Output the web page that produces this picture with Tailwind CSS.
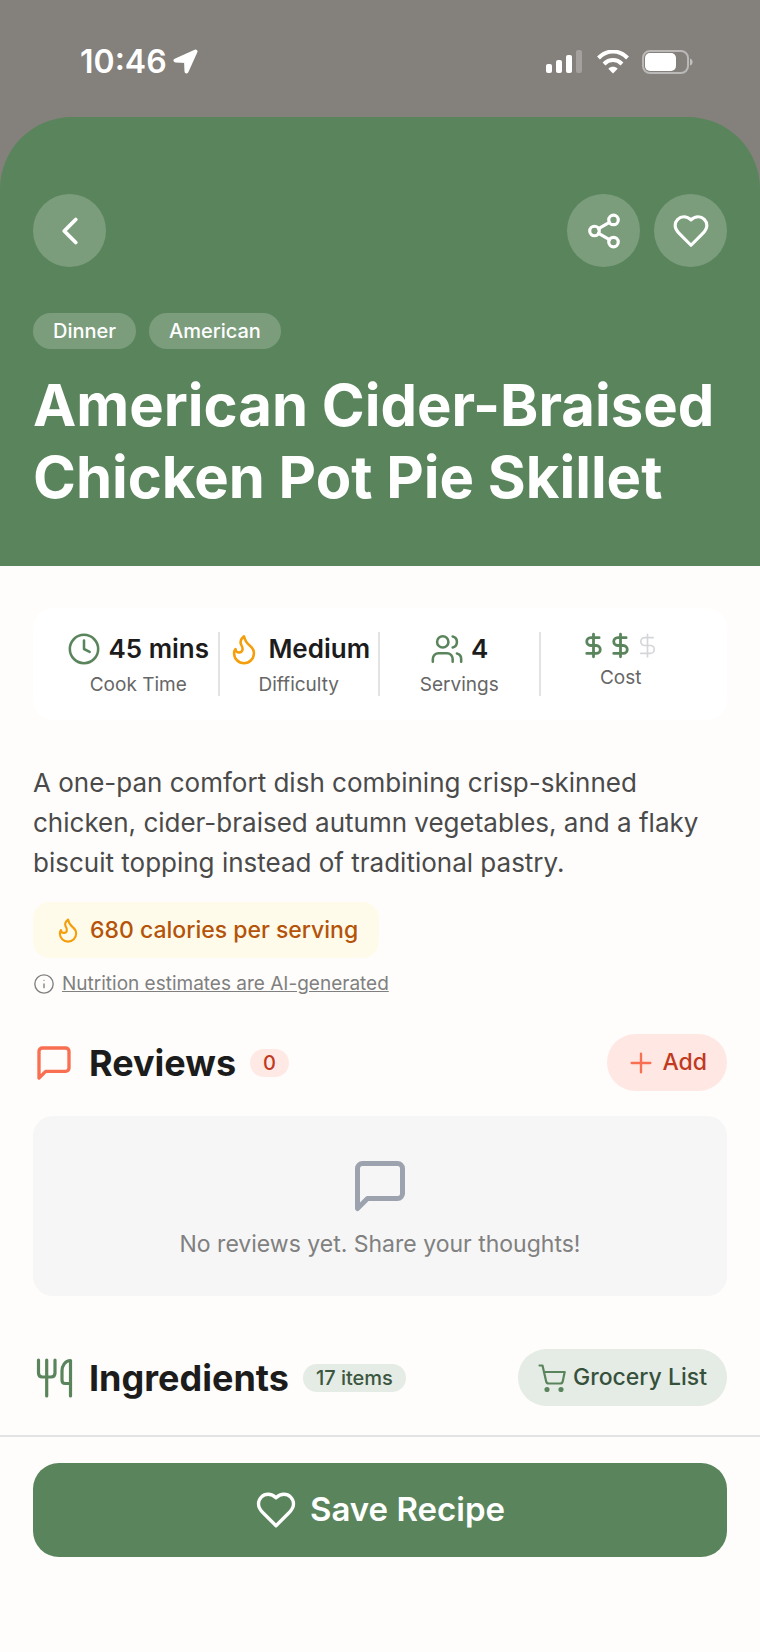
<!DOCTYPE html>
<html lang="en">
<head>
    <meta charset="UTF-8">
    <meta name="viewport" content="width=device-width, initial-scale=1.0">
    <title>American Cider-Braised Chicken Pot Pie Skillet</title>
    <script src="https://cdn.jsdelivr.net/npm/@tailwindcss/browser@4"></script>
</head>
<body class="flex min-h-screen flex-col bg-[#fefdfb] font-['Inter','Liberation_Sans',sans-serif] text-[#1c1c1c]">

    <div class="bg-[#84807c]">
        <!-- Status bar -->
        <div class="flex h-[117px] items-center justify-between pt-[6px] pr-[66px] pl-20 text-white">
            <div class="flex items-center gap-[6px]">
                <span class="text-[32px] font-semibold">10:46</span>
                <svg class="size-[25px]" viewBox="0 0 25 25" fill="currentColor" stroke="currentColor" stroke-width="4" stroke-linejoin="round"><path d="M22.500 2.500 2.500 11.500l10.500.5.500 10.500z"/></svg>
            </div>
            <div class="flex items-center gap-[13px]">
                <svg class="h-6 w-[38px]" viewBox="0 0 38 24" fill="currentColor">
                    <rect x="0" y="14" width="6" height="9" rx="2"/>
                    <rect x="10" y="10" width="6" height="13" rx="2"/>
                    <rect x="20" y="5" width="6" height="18" rx="2"/>
                    <rect x="30" y="0" width="6" height="23" rx="2" opacity=".25"/>
                </svg>
                <svg class="h-6 w-8" viewBox="0 0 32 24" fill="none" stroke="currentColor" stroke-width="4">
                    <path d="M1.500 8C10-.7 22-.7 30.500 8"/>
                    <path d="M7 14C12.300 8.800 19.700 8.800 25 14"/>
                    <path d="M16 23.500 11.300 18.700C14 16.200 18 16.200 20.700 18.700z" fill="currentColor" stroke="none"/>
                </svg>
                <svg class="h-6 w-[52px]" viewBox="0 0 52 24" fill="none">
                    <rect x="1" y="1" width="45" height="22" rx="7" stroke="currentColor" stroke-width="2" opacity=".45"/>
                    <rect x="3" y="3" width="31" height="18" rx="5" fill="currentColor"/>
                    <path d="M48 8.500c3.500 1 3.500 6 0 7z" fill="currentColor" opacity=".5"/>
                </svg>
            </div>
        </div>

        <!-- Recipe header -->
        <header class="rounded-t-[72px] bg-[#5a855c] px-[33px] pt-[77px] pb-[53px] text-white">
            <div class="flex items-center gap-[14px]">
                <button type="button" aria-label="Back" class="mr-auto flex size-[73px] items-center justify-center rounded-full bg-white/20">
                    <svg class="size-[46px]" viewBox="0 0 24 24" fill="none" stroke="currentColor" stroke-width="2" stroke-linecap="round" stroke-linejoin="round"><path d="m15 18-6-6 6-6"/></svg>
                </button>
                <button type="button" aria-label="Share" class="flex size-[73px] items-center justify-center rounded-full bg-white/20">
                    <svg class="size-[38px]" viewBox="0 0 24 24" fill="none" stroke="currentColor" stroke-width="2" stroke-linecap="round" stroke-linejoin="round"><circle cx="18" cy="5" r="3"/><circle cx="6" cy="12" r="3"/><circle cx="18" cy="19" r="3"/><path d="m8.590 13.510 6.830 3.980M15.410 6.510l-6.820 3.980"/></svg>
                </button>
                <button type="button" aria-label="Favorite" class="flex size-[73px] items-center justify-center rounded-full bg-white/20">
                    <svg class="size-[38px]" viewBox="0 0 24 24" fill="none" stroke="currentColor" stroke-width="2" stroke-linecap="round" stroke-linejoin="round"><path d="M19 14c1.490-1.460 3-3.210 3-5.500A5.500 5.500 0 0 0 16.500 3c-1.760 0-3 .5-4.500 2-1.500-1.500-2.740-2-4.500-2A5.500 5.500 0 0 0 2 8.500c0 2.300 1.500 4.050 3 5.500l7 7Z"/></svg>
                </button>
            </div>
            <div class="mt-[46px] flex gap-[13px]">
                <span class="flex h-9 items-center rounded-full bg-white/20 px-5 text-[20px] font-medium">Dinner</span>
                <span class="flex h-9 items-center rounded-full bg-white/20 px-5 text-[20px] font-medium">American</span>
            </div>
            <h1 class="mt-5 text-[58px] leading-[72px] font-bold">American Cider-Braised Chicken Pot Pie Skillet</h1>
        </header>
    </div>

    <main class="px-[33px] pt-[42px] pb-[29px]">

        <!-- Stats -->
        <div class="grid grid-cols-4 divide-x-2 divide-[#e3e3e3] rounded-[20px] bg-white px-[26px] py-6">
            <div class="flex h-16 flex-col items-center gap-[6px]">
                <div class="flex items-center gap-[7px] whitespace-nowrap">
                    <svg class="size-[34px] shrink-0 text-[#5a855c]" viewBox="0 0 24 24" fill="none" stroke="currentColor" stroke-width="1.800" stroke-linecap="round" stroke-linejoin="round"><circle cx="12" cy="12" r="10"/><path d="M12 6v6l4 2"/></svg>
                    <span class="text-[26px] leading-[34px] font-semibold">45 mins</span>
                </div>
                <span class="text-[19px] leading-[26px] text-[#666]">Cook Time</span>
            </div>
            <div class="flex h-16 flex-col items-center gap-[6px]">
                <div class="flex items-center gap-[7px] whitespace-nowrap">
                    <svg class="size-[34px] shrink-0 text-[#f59e0b]" viewBox="0 0 24 24" fill="none" stroke="currentColor" stroke-width="1.800" stroke-linecap="round" stroke-linejoin="round"><path d="M8.500 14.500A2.500 2.500 0 0 0 11 12c0-1.380-.5-2-1-3-1.072-2.143-.224-4.054 2-6 .5 2.500 2 4.900 4 6.500 2 1.600 3 3.500 3 5.500a7 7 0 1 1-14 0c0-1.153.433-2.294 1-3a2.500 2.500 0 0 0 2.500 2.500z"/></svg>
                    <span class="text-[26px] leading-[34px] font-semibold">Medium</span>
                </div>
                <span class="text-[19px] leading-[26px] text-[#666]">Difficulty</span>
            </div>
            <div class="flex h-16 flex-col items-center gap-[6px]">
                <div class="flex items-center gap-[7px] whitespace-nowrap">
                    <svg class="size-[34px] shrink-0 text-[#5a855c]" viewBox="0 0 24 24" fill="none" stroke="currentColor" stroke-width="1.800" stroke-linecap="round" stroke-linejoin="round"><path d="M16 21v-2a4 4 0 0 0-4-4H6a4 4 0 0 0-4 4v2"/><circle cx="9" cy="7" r="4"/><path d="M22 21v-2a4 4 0 0 0-3-3.870M16 3.130a4 4 0 0 1 0 7.750"/></svg>
                    <span class="text-[26px] leading-[34px] font-semibold">4</span>
                </div>
                <span class="text-[19px] leading-[26px] text-[#666]">Servings</span>
            </div>
            <div class="flex h-16 flex-col items-center gap-[6px]">
                <div class="flex">
                    <svg class="size-[27px] text-[#5a855c]" viewBox="0 0 24 24" fill="none" stroke="currentColor" stroke-width="2.500" stroke-linecap="round" stroke-linejoin="round"><path d="M12 2v20M17 5H9.500a3.500 3.500 0 0 0 0 7h5a3.500 3.500 0 0 1 0 7H6"/></svg>
                    <svg class="size-[27px] text-[#5a855c]" viewBox="0 0 24 24" fill="none" stroke="currentColor" stroke-width="2.500" stroke-linecap="round" stroke-linejoin="round"><path d="M12 2v20M17 5H9.500a3.500 3.500 0 0 0 0 7h5a3.500 3.500 0 0 1 0 7H6"/></svg>
                    <svg class="size-[27px] text-[#d4d6da]" viewBox="0 0 24 24" fill="none" stroke="currentColor" stroke-width="1.500" stroke-linecap="round" stroke-linejoin="round"><path d="M12 2v20M17 5H9.500a3.500 3.500 0 0 0 0 7h5a3.500 3.500 0 0 1 0 7H6"/></svg>
                </div>
                <span class="text-[19px] leading-[26px] text-[#666]">Cost</span>
            </div>
        </div>

        <p class="mt-[43px] text-[26px] leading-10 text-[#4a4a4a]">A one-pan comfort dish combining crisp-skinned chicken, cider-braised autumn vegetables, and a flaky biscuit topping instead of traditional pastry.</p>

        <!-- Nutrition -->
        <div class="mt-[19px] flex h-14 w-fit items-center gap-2 rounded-2xl bg-[#fffbeb] px-[21px] text-[#b45309]">
            <svg class="size-[28px] text-[#f59e0b]" viewBox="0 0 24 24" fill="none" stroke="currentColor" stroke-width="1.800" stroke-linecap="round" stroke-linejoin="round"><path d="M8.500 14.500A2.500 2.500 0 0 0 11 12c0-1.380-.5-2-1-3-1.072-2.143-.224-4.054 2-6 .5 2.500 2 4.900 4 6.500 2 1.600 3 3.500 3 5.500a7 7 0 1 1-14 0c0-1.153.433-2.294 1-3a2.500 2.500 0 0 0 2.500 2.500z"/></svg>
            <span class="text-[23px] font-medium">680 calories per serving</span>
        </div>
        <a href="#" class="mt-3 flex h-7 w-fit items-center gap-[7px] text-[#808080]">
            <svg class="size-[22px]" viewBox="0 0 24 24" fill="none" stroke="currentColor" stroke-width="1.500" stroke-linecap="round" stroke-linejoin="round"><circle cx="12" cy="12" r="10"/><path d="M12 16v-4M12 8h.01"/></svg>
            <span class="text-[19px] underline">Nutrition estimates are AI-generated</span>
        </a>

        <!-- Reviews -->
        <section class="mt-9">
            <div class="flex items-center">
                <svg class="mx-[1px] size-10 text-[#f96f51]" viewBox="0 0 24 24" fill="none" stroke="currentColor" stroke-width="2" stroke-linecap="round" stroke-linejoin="round"><path d="M21 15a2 2 0 0 1-2 2H7l-4 4V5a2 2 0 0 1 2-2h14a2 2 0 0 1 2 2z"/></svg>
                <h2 class="ml-[14px] text-[36px] font-bold">Reviews</h2>
                <span class="ml-[14px] flex h-7 items-center rounded-full bg-[#ffe9e5] px-[13px] text-[20px] font-medium text-[#bf3a1f]">0</span>
                <button type="button" class="ml-auto flex h-[57px] items-center gap-[7px] rounded-full bg-[#ffe7e3] px-5 text-[23px] font-medium text-[#bf3a1f]">
                    <svg class="size-7 text-[#f96f51]" viewBox="0 0 24 24" fill="none" stroke="currentColor" stroke-width="2" stroke-linecap="round"><path d="M4 12h16M12 4v16"/></svg>
                    Add
                </button>
            </div>
            <div class="mt-[25px] flex h-[180px] flex-col items-center rounded-[20px] bg-[#f6f6f6] pt-10">
                <svg class="size-[60px] text-[#9ca3af]" viewBox="0 0 24 24" fill="none" stroke="currentColor" stroke-width="2" stroke-linecap="round" stroke-linejoin="round"><path d="M21 15a2 2 0 0 1-2 2H7l-4 4V5a2 2 0 0 1 2-2h14a2 2 0 0 1 2 2z"/></svg>
                <p class="mt-3 text-[23px] leading-8 text-[#808080]">No reviews yet. Share your thoughts!</p>
            </div>
        </section>

        <!-- Ingredients -->
        <section class="mt-[53px]">
            <div class="flex items-center">
                <svg class="mx-[1px] size-10 text-[#5a855c]" viewBox="0 0 40 40" fill="none" stroke="currentColor" stroke-width="3.200" stroke-linecap="round" stroke-linejoin="round"><path d="M4.500 2v13c0 2.500 1.500 4 4 4h8.500c2.500 0 4-1.500 4-4V2M12.700 2v36M36.500 38V2.500C31 2.500 28 8 28 13v9c0 2 1 3.500 3 3.500h5.500"/></svg>
                <h2 class="ml-[14px] text-[36px] font-bold">Ingredients</h2>
                <span class="ml-[14px] flex h-7 items-center rounded-full bg-[#e5ebe5] px-[13px] text-[20px] font-medium text-[#3b573f]">17 items</span>
                <button type="button" class="ml-auto flex h-[57px] items-center gap-[7px] rounded-full bg-[#e5ebe5] px-5 text-[23px] font-medium text-[#36513b]">
                    <svg class="size-7 text-[#5a855c]" viewBox="0 0 28 28" fill="none" stroke="currentColor" stroke-width="2.200" stroke-linecap="round" stroke-linejoin="round"><path d="M1.500 1.500h3l3.700 16c.3 1.300 1.200 2 2.500 2h11.500c1.300 0 2.200-.7 2.500-2l2-9.500H6"/><circle cx="9" cy="25.500" r="1.500" fill="currentColor"/><circle cx="23" cy="25.500" r="1.500" fill="currentColor"/></svg>
                    Grocery List
                </button>
            </div>
        </section>
    </main>

    <!-- Bottom action -->
    <footer class="mt-auto border-t-2 border-[#e3e3e3] px-[33px] pt-[26px] pb-[95px]">
        <button type="button" class="flex h-[94px] w-full items-center justify-center gap-[13px] rounded-[26px] bg-[#5a855c] text-[33px] font-semibold text-white">
            <svg class="size-[42px]" viewBox="0 0 24 24" fill="none" stroke="currentColor" stroke-width="1.900" stroke-linecap="round" stroke-linejoin="round"><path d="M19 14c1.490-1.460 3-3.210 3-5.500A5.500 5.500 0 0 0 16.500 3c-1.760 0-3 .5-4.500 2-1.500-1.500-2.740-2-4.500-2A5.500 5.500 0 0 0 2 8.500c0 2.300 1.500 4.050 3 5.500l7 7Z"/></svg>
            Save Recipe
        </button>
    </footer>

</body>
</html>
